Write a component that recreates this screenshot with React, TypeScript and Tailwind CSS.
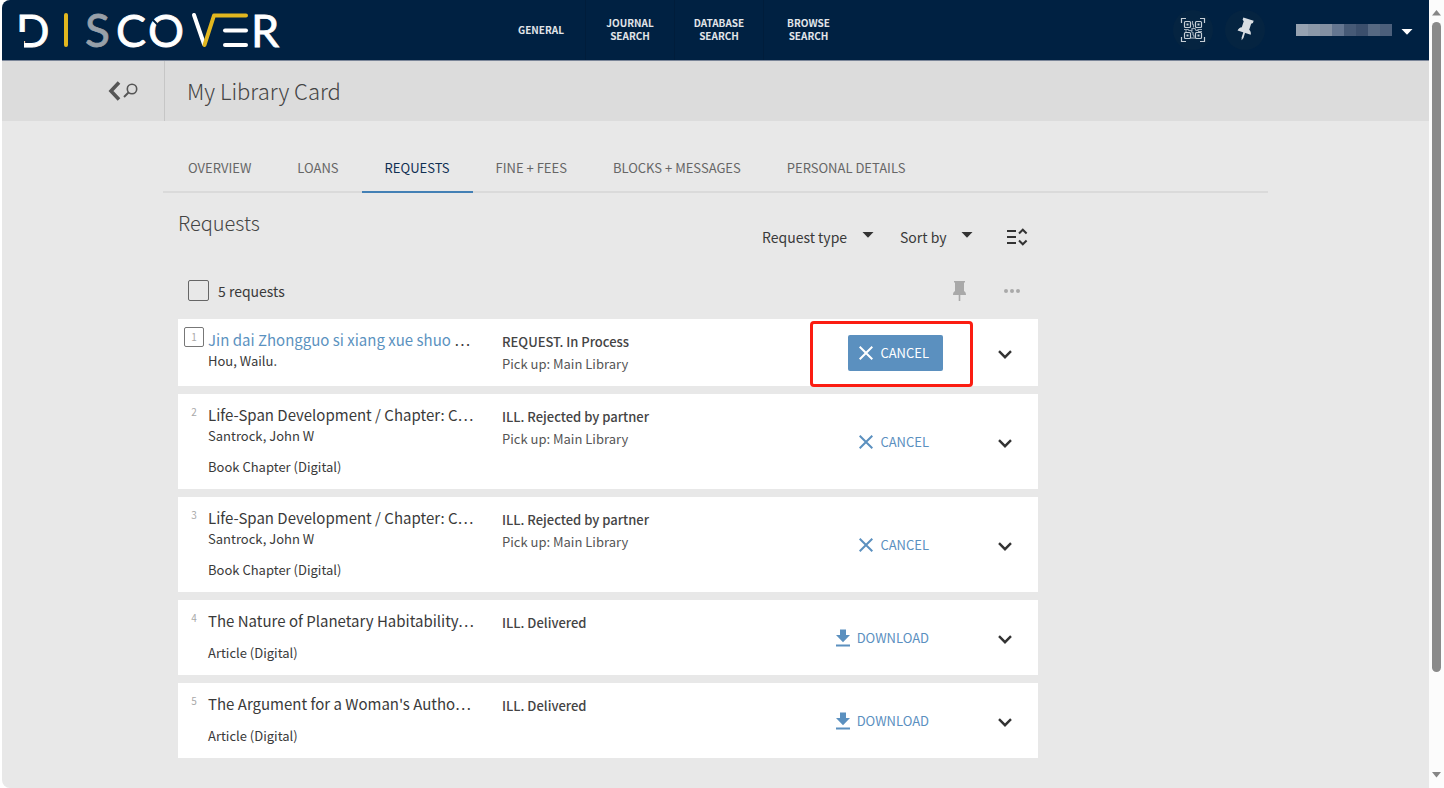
import React from "react";

type Action = "cancel" | "download";

interface RequestItem {
  title: string;
  linked?: boolean;
  author?: string;
  kind?: string;
  status: string;
  pickup?: string;
  action: Action;
}

const requests: RequestItem[] = [
  {
    title: "Jin dai Zhongguo si xiang xue shuo",
    linked: true,
    author: "Hou, Wailu.",
    status: "REQUEST. In Process",
    pickup: "Pick up: Main Library",
    action: "cancel",
  },
  {
    title: "Life-Span Development / Chapter: C…",
    author: "Santrock, John W",
    kind: "Book Chapter (Digital)",
    status: "ILL. Rejected by partner",
    pickup: "Pick up: Main Library",
    action: "cancel",
  },
  {
    title: "Life-Span Development / Chapter: C…",
    author: "Santrock, John W",
    kind: "Book Chapter (Digital)",
    status: "ILL. Rejected by partner",
    pickup: "Pick up: Main Library",
    action: "cancel",
  },
  {
    title: "The Nature of Planetary Habitability…",
    kind: "Article (Digital)",
    status: "ILL. Delivered",
    action: "download",
  },
  {
    title: "The Argument for a Woman's Autho…",
    kind: "Article (Digital)",
    status: "ILL. Delivered",
    action: "download",
  },
];

const navItems = [["GENERAL"], ["JOURNAL", "SEARCH"], ["DATABASE", "SEARCH"], ["BROWSE", "SEARCH"]];

const tabs = ["OVERVIEW", "LOANS", "REQUESTS", "FINE + FEES", "BLOCKS + MESSAGES", "PERSONAL DETAILS"];

function Logo() {
  return (
    <svg width="282" height="60" viewBox="8 0 282 60" role="img" aria-label="DISCOVER" className="shrink-0">
      <g fill="#ffffff" stroke="#ffffff" strokeWidth="0.800" fontFamily="Lato, sans-serif" fontSize="45">
        <text x="16" y="46.500" fontSize="44">D</text>
        <text x="85" y="46.500" fill="#98a0a9" stroke="#98a0a9" fontSize="46">S</text>
        <text x="116" y="46.500">C</text>
        <text x="148" y="46.500">O</text>
        <text x="251" y="46.500">R</text>
      </g>
      <rect x="17" y="32" width="9" height="9" fill="#002142" />
      <rect x="17" y="40" width="7" height="9" fill="#002142" />
      <line x1="151" y1="18" x2="158" y2="25" stroke="#002142" strokeWidth="2" />
      <g fill="none" strokeWidth="4" strokeLinecap="round" strokeLinejoin="round">
        <line x1="66" y1="15" x2="66" y2="45" stroke="#e2b71f" />
        <line x1="194" y1="15" x2="204" y2="44" stroke="#ffffff" />
        <line x1="225" y1="30.500" x2="246" y2="30.500" stroke="#ffffff" />
        <line x1="225" y1="45" x2="246" y2="45" stroke="#ffffff" />
        <polyline points="204.500,45 214,15.500 246,15.500" stroke="#e2b71f" />
      </g>
    </svg>
  );
}

function QrIcon() {
  return (
    <svg width="26" height="26" viewBox="0 0 26 26" fill="none" stroke="#c6ced6" strokeWidth="1.200" aria-hidden="true">
      <path d="M1.500 6V1.500H6M20 1.500h4.500V6M24.500 20v4.500H20M6 24.500H1.500V20" />
      <rect x="4.500" y="4.500" width="6" height="6" rx="1" />
      <rect x="15.500" y="4.500" width="6" height="6" rx="1" />
      <rect x="4.500" y="15.500" width="6" height="6" rx="1" />
      <rect x="15.500" y="15.500" width="6" height="6" rx="1" />
      <path d="M6.500 7.500h2M17.500 7.500h2M6.500 18.500h2M17.500 18.500h2" strokeWidth="2" />
      <path
        d="M12.500 4v3l1 1v2.500M4 12.500h4l1 1h3v-2h3l1 2h2v-1h4M5 14h2M11 14.500l2 1v2l1 1.500v3M18 14.500h4M12 20v2"
        stroke="#9aa7b5"
      />
    </svg>
  );
}

function TiltedPinIcon() {
  return (
    <svg width="26" height="26" viewBox="0 0 24 24" fill="#d9dee3" aria-hidden="true">
      <g transform="rotate(18 12 12)">
        <path d="M7 1.500h10v2.200l-1.400 1v5.800c1.600.8 2.600 2.100 2.800 4H5.600c.2-1.900 1.200-3.200 2.800-4V4.700L7 3.700z" />
        <path d="M11.200 14h1.700v5.500l-.9 2.500-.8-2.500z" />
      </g>
    </svg>
  );
}

function Caret({ className }: { className?: string }) {
  return (
    <svg width="12" height="6" viewBox="0 0 12 6" fill="currentColor" className={className} aria-hidden="true">
      <path d="M.5 0h11L6 5.800z" />
    </svg>
  );
}

function CrossIcon() {
  return (
    <svg width="14" height="14" viewBox="0 0 14 14" fill="none" stroke="currentColor" strokeWidth="2" aria-hidden="true">
      <path d="M.7.7l12.600 12.600M13.300.7L.7 13.300" />
    </svg>
  );
}

function DownloadIcon() {
  return (
    <svg width="14" height="18" viewBox="0 0 14 18" fill="currentColor" aria-hidden="true">
      <path d="M4 .5h6V6h4l-7 7.300L0 6h4zM0 15.500h14v2H0z" />
    </svg>
  );
}

function ChevronIcon() {
  return (
    <svg width="14" height="9" viewBox="0 0 14 9" fill="none" stroke="#333333" strokeWidth="2.400" aria-hidden="true">
      <path d="M1 1.200l6 6 6-6" />
    </svg>
  );
}

function DropDown({ label }: { label: string }) {
  return (
    <div className="grid items-center">
      <select
        aria-label={label}
        className="col-start-1 row-start-1 appearance-none bg-transparent pr-[26px] text-sm leading-6 text-[#3a3a3a]"
      >
        <option>{label}</option>
      </select>
      <Caret className="pointer-events-none col-start-1 row-start-1 mb-1 justify-self-end text-[#333333]" />
    </div>
  );
}

function RequestCard({ item, index }: { item: RequestItem; index: number }) {
  const highlighted = index === 0;
  return (
    <li className="relative flex min-h-[67px] bg-white">
      <div className="flex w-[30px] shrink-0 justify-center pt-2 pl-0.5 text-[10px] text-[#a9a9a9]">
        {highlighted ? (
          <label className="grid h-5 w-5 place-items-center">
            <input
              type="checkbox"
              className="col-start-1 row-start-1 h-5 w-5 appearance-none rounded-xs border border-[#777777]"
            />
            <span className="col-start-1 row-start-1 leading-5">{index + 1}</span>
          </label>
        ) : (
          <span className="leading-5">{index + 1}</span>
        )}
      </div>
      <div className="w-[294px] shrink-0 pt-2.5 pb-3 text-[13px] leading-5 text-[#3a3a3a]">
        <h3 className="text-[15px] leading-[22px] whitespace-nowrap">
          {item.linked ? (
            <>
              <a href="#record" className="text-[#5b92c0]">
                {item.title}
              </a>{" "}
              …
            </>
          ) : (
            item.title
          )}
        </h3>
        {item.author && <p>{item.author}</p>}
        {item.kind && <p className="mt-[11px]">{item.kind}</p>}
      </div>
      <div className="min-w-0 flex-1 pt-3 text-[13px] leading-[22px] text-[#555555]">
        <p className="font-medium text-[#444444]">{item.status}</p>
        {item.pickup && <p>{item.pickup}</p>}
      </div>
      <div className="flex items-center">
        <button
          type="button"
          className={
            highlighted
              ? "flex h-9 items-center gap-[7px] rounded-xs bg-[#5b90bf] pr-3.5 pl-[11px] text-[13px] text-white"
              : "flex h-9 items-center gap-[7px] pr-3.5 pl-[11px] text-[13px] text-[#5b90bf]"
          }
        >
          {item.action === "cancel" ? <CrossIcon /> : <DownloadIcon />}
          {item.action === "cancel" ? "CANCEL" : "DOWNLOAD"}
        </button>
      </div>
      <div className="flex w-[95px] shrink-0 items-center justify-end pt-1 pr-[18px]">
        <button type="button" aria-label="Expand request" className="p-2">
          <ChevronIcon />
        </button>
      </div>
      {highlighted && (
        <div className="pointer-events-none absolute top-0.5 right-[65px] h-[66px] w-[163px] rounded border-3 border-[#fb1d12]" />
      )}
    </li>
  );
}

function ScrollBar() {
  return (
    <div className="flex w-[15px] shrink-0 flex-col items-center bg-[#fcfcfc] py-2.5 text-[#868686]" aria-hidden="true">
      <svg width="9" height="6" viewBox="0 0 9 6" fill="currentColor">
        <path d="M4.500 0L9 5.500H0z" />
      </svg>
      <div className="mt-1.5 w-[9px] grow-[867] rounded-full bg-[#8a8a8a]" />
      <div className="grow-[133]" />
      <svg width="9" height="6" viewBox="0 0 9 6" fill="currentColor">
        <path d="M4.500 5.500L0 0h9z" />
      </svg>
    </div>
  );
}

export default function App() {
  return (
    <div className="flex min-h-screen bg-white pl-0.5 font-['Noto_Sans_CJK_SC','Source_Sans_Pro',sans-serif] text-[#3a3a3a]">
      <div className="min-w-0 flex-1 overflow-hidden rounded-l-lg bg-[#e8e8e8]">
        <header className="flex h-[61px] items-center border-b border-[#7b8699] bg-[#002142] pl-1.5">
          <Logo />
          <nav className="ml-[207px] flex h-full" aria-label="Main">
            {navItems.map((lines) => (
              <a
                key={lines[0]}
                href="#nav"
                className="flex w-[89px] flex-col items-center justify-center border-r border-[#001d3b] pb-0.5 text-[10px] leading-[13px] font-bold text-[#e2e5e9] last:border-r-0"
              >
                {lines.map((line) => (
                  <span key={line}>{line}</span>
                ))}
              </a>
            ))}
          </nav>
          <div className="ml-auto flex items-center pr-4">
            <button
              type="button"
              aria-label="QR code"
              className="flex h-10 w-10 items-center justify-center rounded-full bg-[#052441]"
            >
              <QrIcon />
            </button>
            <button
              type="button"
              aria-label="Pinned items"
              className="ml-3 flex h-10 w-10 items-center justify-center rounded-full bg-[#052441]"
            >
              <TiltedPinIcon />
            </button>
            <button type="button" aria-label="Account menu" className="ml-[31px] flex items-center gap-[9px] text-white">
              <span className="flex h-3">
                <span className="w-3 bg-[#96a2b1]" />
                <span className="w-3 bg-[#8b98a8]" />
                <span className="w-3 bg-[#8390a2]" />
                <span className="w-3 bg-[#647690]" />
                <span className="w-3 bg-[#465a76]" />
                <span className="w-3 bg-[#3b4f6c]" />
                <span className="w-3 bg-[#566982]" />
                <span className="w-3 bg-[#4b5f7b]" />
              </span>
              <Caret className="mt-1" />
            </button>
          </div>
        </header>

        <div className="flex h-[60px] bg-[#dcdcdc]">
          <div className="flex w-[163px] shrink-0 items-center justify-end border-r border-[#c6c6c6] pr-[26px]">
            <a href="#search" aria-label="Back to search" className="text-[#555555]">
              <svg width="30" height="20" viewBox="0 0 30 20" fill="none" stroke="currentColor" aria-hidden="true">
                <path d="M11 1.500L3 10l8 8.500" strokeWidth="3.600" />
                <circle cx="24" cy="8" r="4.700" strokeWidth="1.600" />
                <path d="M20.500 11.500L16 16" strokeWidth="2" />
              </svg>
            </a>
          </div>
          <h1 className="flex items-center pb-0.5 pl-[22px] text-[22px] leading-8 font-light text-[#444444]">My Library Card</h1>
        </div>

        <main className="px-[161px] pt-6 pb-7">
          <div role="tablist" className="flex border-b-2 border-[#dadada] pl-0.5">
            {tabs.map((tab) => (
              <button
                key={tab}
                type="button"
                role="tab"
                aria-selected={tab === "REQUESTS"}
                className={
                  tab === "REQUESTS"
                    ? "-mb-0.5 h-12 border-b-2 border-[#4380b5] px-[23px] text-[13px] text-[#0f2f52]"
                    : "-mb-0.5 h-12 border-b-2 border-transparent px-[23px] text-[13px] text-[#666666]"
                }
              >
                {tab}
              </button>
            ))}
          </div>

          <section className="ml-[15px] max-w-[860px]">
            <div className="flex justify-between pt-3.5">
              <h2 className="text-xl leading-8 font-light text-[#444444]">Requests</h2>
              <div className="flex items-center pt-[18px] pr-2.5">
                <DropDown label="Request type" />
                <div className="w-[26px]" />
                <DropDown label="Sort by" />
                <button type="button" aria-label="Expand all" className="ml-[34px]">
                  <svg width="21" height="18" viewBox="0 0 21 18" fill="none" stroke="#333333" strokeWidth="2" aria-hidden="true">
                    <path d="M0 3h9M0 9h9M0 15h9M12 5.500L15.800 1.700 19.600 5.500M12 12.500l3.800 3.800 3.800-3.800" />
                  </svg>
                </button>
              </div>
            </div>

            <div className="flex items-center justify-between pt-[31px] pr-[18px] pb-[18px] pl-2.5">
              <label className="flex items-center gap-[9px] text-sm leading-5">
                <input
                  type="checkbox"
                  className="h-[21px] w-[21px] appearance-none rounded-xs border border-[#666666]"
                />
                5 requests
              </label>
              <div className="flex items-center gap-[38px] text-[#a9a9a9]">
                <button type="button" aria-label="Pin selected">
                  <svg width="13" height="20" viewBox="0 0 13 20" fill="currentColor" aria-hidden="true">
                    <path d="M1 0h11v1.500h-1V10c1.300.7 2 2 2 4H7.300v6H5.700v-6H0c0-2 .7-3.300 2-4V1.500H1z" />
                  </svg>
                </button>
                <button type="button" aria-label="More actions">
                  <svg width="16" height="4" viewBox="0 0 16 4" fill="currentColor" aria-hidden="true">
                    <circle cx="2" cy="2" r="2" />
                    <circle cx="8" cy="2" r="2" />
                    <circle cx="14" cy="2" r="2" />
                  </svg>
                </button>
              </div>
            </div>

            <ol className="flex flex-col gap-2">
              {requests.map((item, index) => (
                <RequestCard key={index} item={item} index={index} />
              ))}
            </ol>
          </section>
        </main>
      </div>
      <ScrollBar />
    </div>
  );
}
